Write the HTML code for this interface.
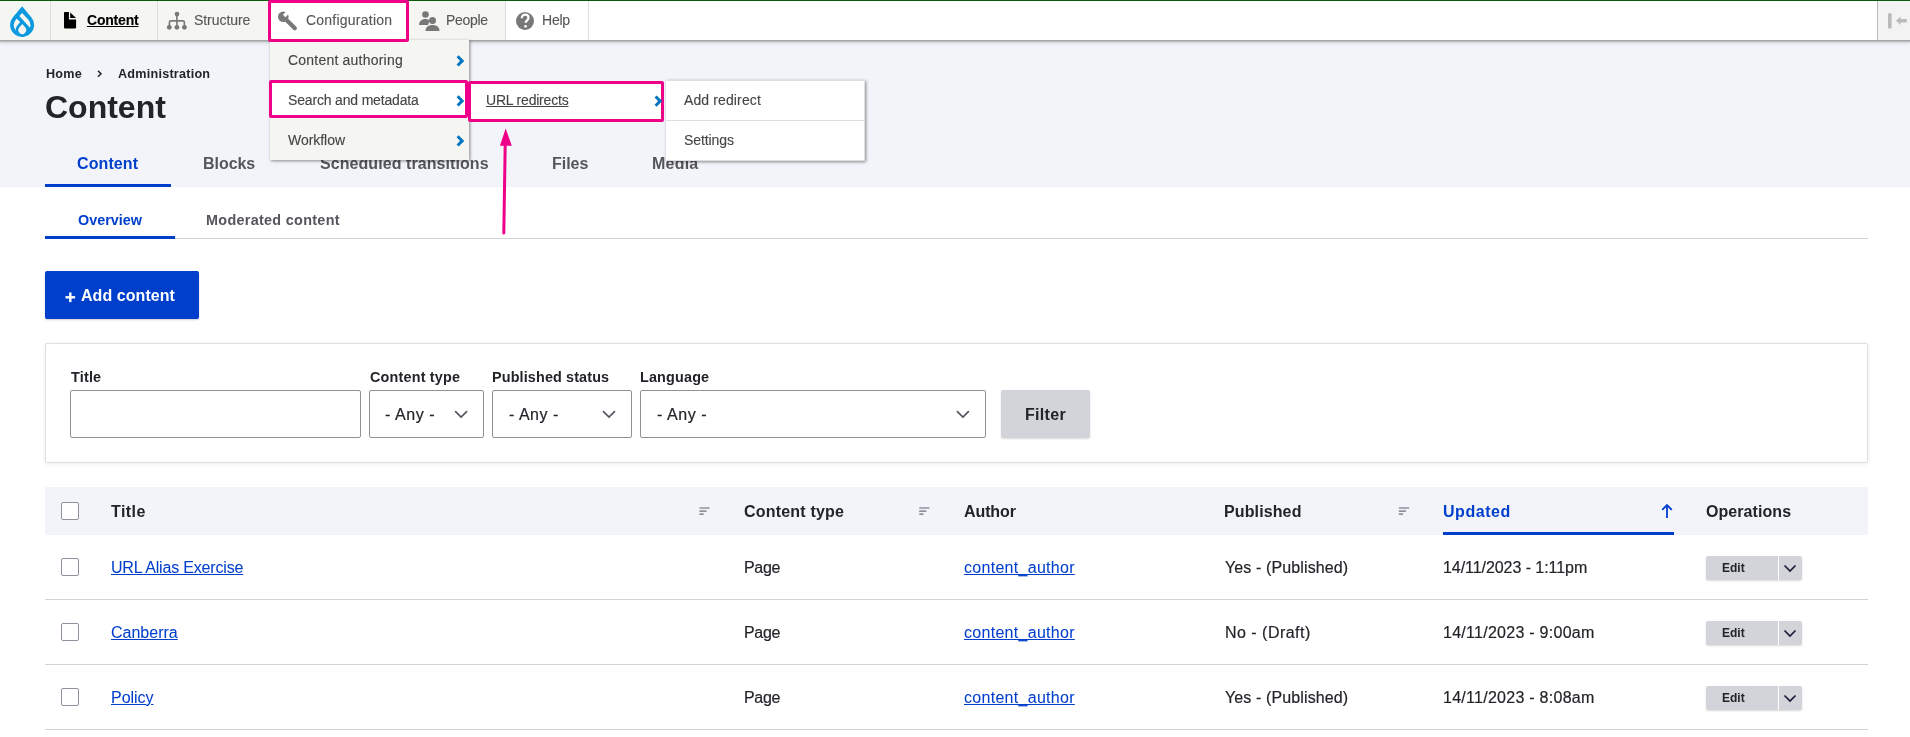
<!DOCTYPE html>
<html><head><meta charset="utf-8">
<style>
*{box-sizing:border-box;margin:0;padding:0}
html,body{width:1910px;height:737px;overflow:hidden;background:#fff}
body{position:relative;font-family:"Liberation Sans",sans-serif;color:#232429}
.a{position:absolute;white-space:nowrap}
.t{position:absolute;white-space:nowrap;line-height:1}
.tt,.mt,.t,.tab,.lbl,.any,.th,.td,.edit span{will-change:transform}
.td,.any{-webkit-text-stroke:0.2px currentColor}
.lnk{-webkit-text-stroke:0.05px currentColor}
.mt,.tt{-webkit-text-stroke:0.12px currentColor}
.b{font-weight:bold}
#hdr{position:absolute;left:0;top:0;width:1910px;height:187px;background:#f3f4f9}
#tb{position:absolute;left:0;top:0;width:1910px;height:40px;background:#fff;border-top:1px solid #0b5a0b;box-shadow:0 1px 0 #a6a6a6,0 2px 0 #babbbf,0 3px 3px rgba(0,0,0,.16)}
.tbi{position:absolute;top:0;height:39px;background:#f5f5f2;border-right:1px solid #ddd}
.tt{position:absolute;z-index:6;font-size:14px;line-height:1;color:#565656;white-space:nowrap}
.pink{position:absolute;border:3px solid #ee0089;border-radius:2px}
.menu{position:absolute;background:#f5f5f2;box-shadow:1px 1px 3px rgba(0,0,0,.45)}
.mt{position:absolute;font-size:14px;line-height:1;color:#444;white-space:nowrap}
.chev{position:absolute}
.tab{position:absolute;font-size:16px;font-weight:bold;line-height:1;color:#55565b;white-space:nowrap}
.lbl{position:absolute;font-size:14.4px;font-weight:bold;line-height:1;white-space:nowrap}
.inp{position:absolute;top:390px;height:48px;border:1px solid #919297;border-radius:2px;background:#fff}
.any{position:absolute;font-size:16px;line-height:1;white-space:nowrap}
.th{position:absolute;font-size:16px;font-weight:bold;line-height:1;white-space:nowrap}
.td{position:absolute;font-size:16px;line-height:1;white-space:nowrap}
.lnk{color:#003ecc;text-decoration:underline;text-underline-offset:1px}
.cb{position:absolute;left:61px;width:18px;height:18px;border:1px solid #8e929c;border-radius:2px;background:#fff}
.rl{position:absolute;left:45px;width:1823px;height:1px;background:#d3d4d9}
.edit{position:absolute;left:1706px;width:96px;height:24px;background:#d3d4d9;border-radius:2px;box-shadow:0 1px 2px rgba(0,0,0,.15)}
.edit span{position:absolute;left:16px;top:6px;font-size:12px;font-weight:bold;line-height:1}
.edit i{position:absolute;left:72px;top:0;width:1px;height:24px;background:#fff}
</style></head><body>
<div id="hdr"></div>

<!-- Toolbar -->
<div id="tb">
  <div class="tbi" style="left:0;width:51px"></div>
  <div class="tbi" style="left:51px;width:107px"></div>
  <div class="tbi" style="left:158px;width:111px"></div>
  <div class="tbi" style="left:409px;width:97px"></div>
  <div class="tbi" style="left:506px;width:83px;background:#fff"></div>
  <div class="tbi" style="left:1877px;width:33px;background:#f3f3f3;border-right:0;border-left:1px solid #bbb"></div>
</div>
<div class="pink" style="left:268px;top:0;width:141px;height:42px;background:#fff;z-index:5"></div>
<svg class="a" style="left:0;top:0;z-index:6" width="1910" height="40" viewBox="0 0 1910 40">
  <!-- drupal logo -->
  <path d="M22.1,6.3 L31.27,17.16 A12,12 0 1 1 12.93,17.16 Z" fill="#0d99e0"/>
  <path d="M22.1,13 L28.19,19.42 A8.4,8.4 0 1 1 16.01,19.42 Z" fill="#f5f5f2"/>
  <line x1="17.3" y1="16.5" x2="31" y2="31.4" stroke="#0d99e0" stroke-width="3.5"/>
  <path d="M22.3,19.5 L27.49,25.86 A6.7,6.7 0 1 1 17.11,25.86 Z" fill="#0d99e0"/>
  <path d="M22.3,24 L25.3,27.61 A3.9,3.9 0 1 1 19.3,27.61 Z" fill="#f5f5f2"/>
  <!-- doc icon -->
  <path d="M64.8,12.1 H68.9 V19.4 H76.1 V27.6 A0.8,0.8 0 0 1 75.3,28.4 H64.8 A0.8,0.8 0 0 1 64,27.6 V12.9 A0.8,0.8 0 0 1 64.8,12.1 Z" fill="#000"/>
  <path d="M70.2,12.4 L76.1,18.1 H70.2 Z" fill="#000"/>
  <!-- structure icon -->
  <g fill="#787878" stroke="#787878">
    <circle cx="177" cy="14.1" r="2.3" stroke="none"/>
    <line x1="176.9" y1="14" x2="176.9" y2="27" stroke-width="1.6"/>
    <path d="M169.4,27 V22.5 Q169.4,20.9 171,20.9 H182.8 Q184.4,20.9 184.4,22.5 V27" fill="none" stroke-width="1.6"/>
    <circle cx="169.3" cy="27.3" r="2.4" stroke="none"/>
    <circle cx="176.9" cy="27.3" r="2.4" stroke="none"/>
    <circle cx="184.4" cy="27.3" r="2.4" stroke="none"/>
  </g>
  <!-- wrench -->
  <circle cx="283.3" cy="16.8" r="5.3" fill="#787878"/>
  <line x1="284" y1="17.5" x2="294.8" y2="28.2" stroke="#787878" stroke-width="4.2" stroke-linecap="round"/>
  <path d="M282.9,14.7 L285.4,17.2 L289.6,13 L287,10.4 Z" fill="#fff"/>
  <!-- people -->
  <g fill="#787878">
    <circle cx="425.5" cy="14.5" r="3.3"/>
    <path d="M419,25 C419,21.5 421.5,19 425.5,19 C427,19 428.5,19.5 429.5,20.5 L428,25 Z"/>
    <circle cx="432.5" cy="20.5" r="3.5"/>
    <path d="M425.5,31 C425.5,27 428.5,25 432.5,25 C436.5,25 439.5,27 439.5,31 Z"/>
  </g>
  <!-- help -->
  <circle cx="525" cy="21" r="9" fill="#787878"/>
  <path d="M521.8,18.3 C521.8,15.8 523.3,14.6 525.2,14.6 C527.3,14.6 528.5,15.9 528.5,17.7 C528.5,20.2 525.6,20.4 525.6,22.8" fill="none" stroke="#fff" stroke-width="2.3"/>
  <circle cx="525.6" cy="26.3" r="1.4" fill="#fff"/>
  <!-- collapse icon -->
  <rect x="1888" y="13.2" width="3.6" height="15.3" rx="0.8" fill="#bbb"/>
  <path d="M1896,20.8 L1900.5,16.6 V19 H1906.8 V22.6 H1900.5 V25 Z" fill="#bbb"/>
</svg>
<div id="tbc" class="tt b" style="left:87px;top:13px;color:#000;text-decoration:underline;letter-spacing:-0.20px">Content</div>
<div id="tbs" class="tt" style="left:194px;top:13px;letter-spacing:-0.06px">Structure</div>
<div id="tbg" class="tt" style="left:306px;top:13px;letter-spacing:0.23px">Configuration</div>
<div id="tbp" class="tt" style="left:446px;top:13px;letter-spacing:-0.30px">People</div>
<div id="tbh" class="tt" style="left:542px;top:13px;letter-spacing:-0.23px">Help</div>

<!-- breadcrumb / title -->
<div id="bch" class="t b" style="left:46px;top:68px;font-size:12.64px;letter-spacing:0.20px">Home</div>
<svg class="a" style="left:90px;top:66px" width="16" height="16" viewBox="90 66 16 16"><path d="M98,70.9 L101,73.8 L98,76.7" fill="none" stroke="#232429" stroke-width="1.5"/></svg>
<div id="bca" class="t b" style="left:118px;top:68px;font-size:12.64px;letter-spacing:0.23px">Administration</div>
<div id="h1" class="t b" style="left:45px;top:91px;font-size:32px">Content</div>

<!-- primary tabs -->
<div id="tc" class="tab" style="left:77px;top:156px;color:#003ecc;letter-spacing:0.10px">Content</div>
<div class="a" style="left:45px;top:184px;width:126px;height:3px;background:#003ecc"></div>
<div id="tb2" class="tab" style="left:203px;top:156px;letter-spacing:-0.04px">Blocks</div>
<div id="tst" class="tab" style="left:320px;top:156px;letter-spacing:0.07px">Scheduled transitions</div>
<div id="tfi" class="tab" style="left:552px;top:156px;letter-spacing:-0.03px">Files</div>
<div id="tme" class="tab" style="left:652px;top:156px;letter-spacing:0.23px">Media</div>

<!-- secondary tabs -->
<div class="a" style="left:45px;top:238px;width:1823px;height:1px;background:#d3d4d9"></div>
<div id="sov" class="t b" style="left:78px;top:213px;font-size:14.4px;color:#003ecc">Overview</div>
<div id="smo" class="t b" style="left:206px;top:213px;font-size:14.4px;color:#55565b;letter-spacing:0.30px">Moderated content</div>
<div class="a" style="left:45px;top:236px;width:130px;height:3px;background:#003ecc"></div>

<!-- add content -->
<div class="a" style="left:45px;top:271px;width:154px;height:48px;background:#003ecc;border-radius:2px;box-shadow:0 1px 2px rgba(0,0,0,.2)"></div>
<svg class="a" style="left:60px;top:285px" width="20" height="22" viewBox="60 285 20 22"><rect x="65.5" y="296.1" width="9.6" height="2.4" fill="#fff"/><rect x="69.1" y="292.5" width="2.4" height="9.6" fill="#fff"/></svg><div id="btn" class="t b" style="left:80.7px;top:288px;font-size:16px;color:#fff;letter-spacing:0.06px">Add content</div>

<!-- filter box -->
<div class="a" style="left:45px;top:343px;width:1823px;height:120px;border:1px solid #dedfe4;border-radius:2px;box-shadow:0 1px 4px rgba(0,0,0,.08)"></div>
<div id="l1" class="lbl" style="left:71px;top:370px;letter-spacing:0.19px">Title</div>
<div id="l2" class="lbl" style="left:370px;top:370px;letter-spacing:0.19px">Content type</div>
<div id="l3" class="lbl" style="left:492px;top:370px;letter-spacing:0.13px">Published status</div>
<div id="l4" class="lbl" style="left:640px;top:370px;letter-spacing:0.16px">Language</div>
<div class="inp" style="left:70px;width:291px"></div>
<div class="inp" style="left:369px;width:115px"></div>
<div class="inp" style="left:492px;width:140px"></div>
<div class="inp" style="left:640px;width:346px"></div>
<div id="an1" class="any" style="left:385px;top:407px;letter-spacing:0.55px">- Any -</div>
<div id="an2" class="any" style="left:509px;top:407px;letter-spacing:0.50px">- Any -</div>
<div id="an3" class="any" style="left:657px;top:407px;letter-spacing:0.55px">- Any -</div>
<svg class="a" style="left:0;top:400px" width="1910" height="30" viewBox="0 400 1910 30">
  <g fill="none" stroke="#545560" stroke-width="1.7" stroke-linecap="round">
    <path d="M455.6,411.7 L461.1,417 L466.6,411.7"/>
    <path d="M603.5,411.7 L609,417 L614.5,411.7"/>
    <path d="M957.4,411.7 L962.9,417 L968.4,411.7"/>
  </g>
</svg>
<div class="a" style="left:1001px;top:390px;width:89px;height:48px;background:#d3d4d9;border-radius:2px;box-shadow:0 1px 2px rgba(0,0,0,.15)"></div>
<div id="flt" class="t b" style="left:1025px;top:407px;font-size:16px;letter-spacing:0.30px">Filter</div>

<!-- table -->
<div class="a" style="left:45px;top:487px;width:1823px;height:48px;background:#f3f4f9"></div>
<div class="cb" style="top:502px"></div>
<div id="h_t" class="th" style="left:111px;top:504px;letter-spacing:0.45px">Title</div>
<div id="h_c" class="th" style="left:744px;top:504px;letter-spacing:0.19px">Content type</div>
<div id="h_a" class="th" style="left:964px;top:504px;letter-spacing:-0.10px">Author</div>
<div id="h_p" class="th" style="left:1224px;top:504px;letter-spacing:0.12px">Published</div>
<div id="h_u" class="th" style="left:1443px;top:504px;color:#003ecc;letter-spacing:0.55px">Updated</div>
<div id="h_o" class="th" style="left:1706px;top:504px;letter-spacing:0.07px">Operations</div>
<div class="a" style="left:1443px;top:532px;width:231px;height:3px;background:#003ecc"></div>
<svg class="a" style="left:0;top:500px" width="1910" height="22" viewBox="0 500 1910 22">
  <g fill="#8e929c">
<rect x="699.4" y="507.2" width="10.3" height="1.6" rx=".3"/><rect x="699.4" y="510.3" width="7.2" height="1.6" rx=".3"/><rect x="699.4" y="513.3" width="4.3" height="1.6" rx=".3"/>
<rect x="919.2" y="507.2" width="10.3" height="1.6" rx=".3"/><rect x="919.2" y="510.3" width="7.2" height="1.6" rx=".3"/><rect x="919.2" y="513.3" width="4.3" height="1.6" rx=".3"/>
<rect x="1398.8" y="507.2" width="10.3" height="1.6" rx=".3"/><rect x="1398.8" y="510.3" width="7.2" height="1.6" rx=".3"/><rect x="1398.8" y="513.3" width="4.3" height="1.6" rx=".3"/>
  </g>
  <g fill="none" stroke="#003ecc" stroke-width="1.8">
    <path d="M1667,505 V518"/>
    <path d="M1662.2,509.8 L1667,505 L1671.8,509.8"/>
  </g>
</svg>

<!-- rows -->
<div class="cb" style="top:558px"></div>
<div id="ti1" class="td" style="left:111px;top:560px;letter-spacing:-0.18px"><span class="lnk">URL Alias Exercise</span></div>
<div id="pg1" class="td" style="left:744px;top:560px;letter-spacing:-0.30px">Page</div>
<div id="au1" class="td" style="left:964px;top:560px;letter-spacing:0.29px"><span class="lnk">content_author</span></div>
<div id="pu1" class="td" style="left:1225px;top:560px;letter-spacing:0.12px">Yes - (Published)</div>
<div id="dt1" class="td" style="left:1443px;top:560px;letter-spacing:-0.06px">14/11/2023 - 1:11pm</div>
<div class="edit" style="top:556px"><span>Edit</span><i></i></div>
<div class="rl" style="top:599px"></div>

<div class="cb" style="top:623px"></div>
<div id="ti2" class="td" style="left:111px;top:625px"><span class="lnk">Canberra</span></div>
<div id="pg2" class="td" style="left:744px;top:625px;letter-spacing:-0.30px">Page</div>
<div id="au2" class="td" style="left:964px;top:625px;letter-spacing:0.29px"><span class="lnk">content_author</span></div>
<div id="pu2" class="td" style="left:1225px;top:625px;letter-spacing:0.48px">No - (Draft)</div>
<div id="dt2" class="td" style="left:1443px;top:625px;letter-spacing:0.27px">14/11/2023 - 9:00am</div>
<div class="edit" style="top:621px"><span>Edit</span><i></i></div>
<div class="rl" style="top:664px"></div>

<div class="cb" style="top:688px"></div>
<div id="ti3" class="td" style="left:111px;top:690px;letter-spacing:-0.04px"><span class="lnk">Policy</span></div>
<div id="pg3" class="td" style="left:744px;top:690px;letter-spacing:-0.30px">Page</div>
<div id="au3" class="td" style="left:964px;top:690px;letter-spacing:0.29px"><span class="lnk">content_author</span></div>
<div id="pu3" class="td" style="left:1225px;top:690px;letter-spacing:0.12px">Yes - (Published)</div>
<div id="dt3" class="td" style="left:1443px;top:690px;letter-spacing:0.27px">14/11/2023 - 8:08am</div>
<div class="edit" style="top:686px"><span>Edit</span><i></i></div>
<div class="rl" style="top:729px"></div>

<svg class="a" style="left:0;top:550px" width="1910" height="170" viewBox="0 550 1910 170">
  <g fill="none" stroke="#1a1d3a" stroke-width="1.7">
    <path d="M1784.5,565.5 L1790,571 L1795.5,565.5"/>
    <path d="M1784.5,630.5 L1790,636 L1795.5,630.5"/>
    <path d="M1784.5,695.5 L1790,701 L1795.5,695.5"/>
  </g>
</svg>

<!-- config dropdown -->
<div class="menu" style="left:270px;top:40px;width:199px;height:120px"></div>
<div class="pink" style="left:269px;top:80px;width:199px;height:38px;background:#fff"></div>
<div id="mca" class="mt" style="left:288px;top:53px;letter-spacing:0.21px">Content authoring</div>
<div id="msm" class="mt" style="left:288px;top:93px;letter-spacing:-0.17px">Search and metadata</div>
<div id="mwf" class="mt" style="left:288px;top:133px;letter-spacing:-0.04px">Workflow</div>

<div class="pink" style="left:468px;top:81px;width:196px;height:41px;background:#fff"></div>
<div id="murl" class="mt" style="left:486px;top:93px;text-decoration:underline;letter-spacing:-0.20px">URL redirects</div>

<div class="menu" style="left:666px;top:80px;width:199px;height:81px;background:#fff;border:1px solid #e0e0e0;border-left:0"></div>
<div class="a" style="left:666px;top:120px;width:198px;height:1px;background:#ddd"></div>
<div id="madd" class="mt" style="left:684px;top:93px;letter-spacing:0.12px">Add redirect</div>
<div id="mset" class="mt" style="left:684px;top:133px;letter-spacing:-0.10px">Settings</div>

<svg class="a" style="left:0;top:40px" width="900" height="200" viewBox="0 40 900 200">
  <g fill="none" stroke="#0074bd" stroke-width="2.9">
    <path d="M457.6,56.3 L462.2,60.9 L457.6,65.5"/>
    <path d="M457.6,96.3 L462.2,100.9 L457.6,105.5"/>
    <path d="M457.6,136.3 L462.2,140.9 L457.6,145.5"/>
    <path d="M655.6,96.5 L660.2,101.1 L655.6,105.7"/>
  </g>
  <path d="M503.8,233 L505.2,144" stroke="#ee0089" stroke-width="3" stroke-linecap="round"/>
  <path d="M505.7,128.5 L511.8,145.7 L499.9,145.7 Z" fill="#ee0089"/>
</svg>
</body></html>
